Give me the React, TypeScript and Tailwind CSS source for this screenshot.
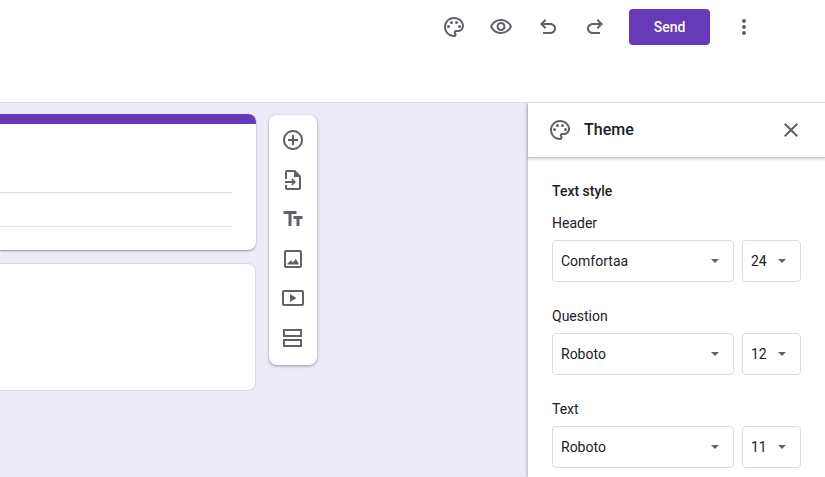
import React, { useState } from 'react';
import { MdClose, MdMoreVert, MdOutlinePalette, MdOutlineVisibility, MdTextFields } from 'react-icons/md';

type StyleKey = 'header' | 'question' | 'text';

interface TextStyle {
    key: StyleKey;
    label: string;
    font: string;
    size: string;
}

const FONTS = ['Roboto', 'Comfortaa', 'Lato', 'Open Sans', 'Inter'];
const SIZES = ['10', '11', '12', '14', '18', '20', '24', '30'];

const initialStyles: TextStyle[] = [
    { key: 'header', label: 'Header', font: 'Comfortaa', size: '24' },
    { key: 'question', label: 'Question', font: 'Roboto', size: '12' },
    { key: 'text', label: 'Text', font: 'Roboto', size: '11' },
];

const Icon: React.FC<{ children: React.ReactNode }> = ({ children }) => (
    <svg xmlns="http://www.w3.org/2000/svg" className="h-6 w-6" viewBox="0 0 24 24" fill="currentColor" aria-hidden="true">
        {children}
    </svg>
);

const UndoIcon = () => (
    <Icon>
        <path d="M7 19v-2h7.1c1.05 0 1.96-.33 2.74-1S18 14.5 18 13.5s-.39-1.83-1.16-2.5-1.69-1-2.74-1H7.8l2.6 2.6L9 14 4 9l5-5 1.4 1.4L7.8 8h6.3c1.62 0 3 .53 4.16 1.58S20 11.93 20 13.5s-.58 2.88-1.74 3.93S15.72 19 14.1 19H7z" />
    </Icon>
);

const RedoIcon = () => (
    <Icon>
        <path d="M17 19v-2H9.9c-1.05 0-1.96-.33-2.74-1S6 14.5 6 13.5s.39-1.83 1.16-2.5S8.85 10 9.9 10h6.3l-2.6 2.6L15 14l5-5-5-5-1.4 1.4L16.2 8H9.9c-1.62 0-3 .53-4.16 1.58S4 11.93 4 13.5s.58 2.88 1.74 3.93S8.28 19 9.9 19H17z" />
    </Icon>
);

const AddIcon = () => (
    <Icon>
        <path d="M13 7h-2v4H7v2h4v4h2v-4h4v-2h-4V7zm-1-5C6.48 2 2 6.48 2 12s4.48 10 10 10 10-4.48 10-10S17.52 2 12 2zm0 18c-4.41 0-8-3.59-8-8s3.59-8 8-8 8 3.59 8 8-3.59 8-8 8z" />
    </Icon>
);

const ImportIcon = () => (
    <Icon>
        <path d="M14 2H6c-1.1 0-2 .9-2 2v7h2V4h7v5h5v11H6v-3H4v3c0 1.1.9 2 2 2h12c1.1 0 2-.9 2-2V8l-6-6z" />
        <path d="M11.4 10.5 10.2 11.7 11.5 13H4v2h7.5l-1.3 1.3 1.2 1.2L15 14l-3.6-3.5z" />
    </Icon>
);

const ImageIcon = () => (
    <Icon>
        <path d="M19 3H5c-1.1 0-2 .9-2 2v14c0 1.1.9 2 2 2h14c1.1 0 2-.9 2-2V5c0-1.1-.9-2-2-2zm0 16H5V5h14v14z" />
        <path d="M6.5 17.5h11v-1.6L14.8 12l-2.9 3.6-2-2.4-3.4 3.2v1.1z" />
    </Icon>
);

const VideoIcon = () => (
    <Icon>
        <path d="M21 4H3c-1.1 0-2 .9-2 2v12c0 1.1.9 2 2 2h18c1.1 0 2-.9 2-2V6c0-1.1-.9-2-2-2zm0 14H3V6h18v12z" />
        <path d="M9 8v8l6.5-4L9 8z" />
    </Icon>
);

const SectionIcon = () => (
    <Icon>
        <path d="M2 3v8h19V3H2zm17 6H4V5h15v4zM2 13v8h19v-8H2zm17 6H4v-4h15v4z" />
    </Icon>
);

const topActions = [
    { label: 'Customize theme', icon: <MdOutlinePalette className="h-6 w-6" /> },
    { label: 'Preview', icon: <MdOutlineVisibility className="h-6 w-6" /> },
    { label: 'Undo', icon: <UndoIcon /> },
    { label: 'Redo', icon: <RedoIcon /> },
];

const tools = [
    { label: 'Add question', icon: <AddIcon /> },
    { label: 'Import questions', icon: <ImportIcon /> },
    { label: 'Add title and description', icon: <MdTextFields className="h-6 w-6" /> },
    { label: 'Add image', icon: <ImageIcon /> },
    { label: 'Add video', icon: <VideoIcon /> },
    { label: 'Add section', icon: <SectionIcon /> },
];

interface SelectProps {
    id: string;
    label: string;
    value: string;
    options: string[];
    className: string;
    onChange: (value: string) => void;
}

const Select: React.FC<SelectProps> = ({ id, label, value, options, className, onChange }) => (
    <div className={`grid items-center ${className}`}>
        <select
            id={id}
            aria-label={label}
            value={value}
            onChange={(e) => onChange(e.target.value)}
            className="col-start-1 row-start-1 h-[42px] w-full appearance-none rounded border border-[#dadce0] bg-white pl-2 text-sm text-[#202124]"
        >
            {options.map((option) => (
                <option key={option} value={option}>{option}</option>
            ))}
        </select>
        <svg className="pointer-events-none col-start-1 row-start-1 mr-[15px] h-1 w-2 justify-self-end text-[#5f6368]" viewBox="0 0 8 4" fill="currentColor" aria-hidden="true">
            <path d="M0 0h8L4 4z" />
        </svg>
    </div>
);

const ThemePanel = () => {
    const [styles, setStyles] = useState<TextStyle[]>(initialStyles);

    const update = (key: StyleKey, changes: Partial<TextStyle>) => {
        setStyles(styles.map(s => (s.key === key ? { ...s, ...changes } : s)));
    };

    return (
        <aside className="z-10 w-[297px] shrink-0 bg-white shadow-[0_0_4px_rgba(60,64,67,0.5)]">
            <div className="flex h-[55px] items-center border-b border-[#c8c9cb] pl-5 pr-[22px] text-[#5f6368] shadow-[0_1px_3px_rgba(60,64,67,0.25)]">
                <MdOutlinePalette className="h-6 w-6" />
                <h2 className="ml-3 flex-1 text-base font-medium text-[#202124]">Theme</h2>
                <button aria-label="Close" className="text-[#5f6368]">
                    <MdClose className="h-6 w-6" />
                </button>
            </div>
            <div className="px-6 pb-2 pt-[23px] text-sm text-[#202124]">
                <h3 className="mb-3 font-medium">Text style</h3>
                <div className="flex flex-col gap-6">
                    {styles.map((style) => (
                        <div key={style.key}>
                            <label htmlFor={`font-${style.key}`} className="mb-[7px] block">{style.label}</label>
                            <div className="flex gap-2">
                                <Select
                                    id={`font-${style.key}`}
                                    label={`${style.label} font`}
                                    value={style.font}
                                    options={FONTS}
                                    className="flex-1"
                                    onChange={(font) => update(style.key, { font })}
                                />
                                <Select
                                    id={`size-${style.key}`}
                                    label={`${style.label} size`}
                                    value={style.size}
                                    options={SIZES}
                                    className="w-[59px]"
                                    onChange={(size) => update(style.key, { size })}
                                />
                            </div>
                        </div>
                    ))}
                </div>
            </div>
        </aside>
    );
};

const App: React.FC = () => {
    return (
        <div className="flex min-h-screen flex-col bg-white font-[Roboto,sans-serif]">
            <header className="z-20 flex h-[103px] items-start justify-end border-b border-[#dadce0] bg-white pr-[69px] pt-[9px]">
                <div className="flex h-9 items-center text-[#5f6368]">
                    <div className="mr-[22px] flex gap-[23px]">
                        {topActions.map((action) => (
                            <button key={action.label} aria-label={action.label}>{action.icon}</button>
                        ))}
                    </div>
                    <button className="h-9 w-[81px] rounded bg-[#673ab7] text-sm font-medium text-white">Send</button>
                    <button aria-label="More" className="ml-[22px]">
                        <MdMoreVert className="h-6 w-6" />
                    </button>
                </div>
            </header>

            <div className="flex flex-1">
                <main className="flex flex-1 items-start bg-[#eeebf9] pr-[211px] pt-[11px]">
                    <div className="flex flex-1 flex-col gap-[13px]">
                        <section className="rounded-r-lg border-t-[10px] border-[#673ab7] bg-white pb-[23px] pr-6 pt-[68px] shadow-[0_1px_2px_rgba(60,64,67,0.55)]">
                            <div className="border-b border-[#dadce0]"></div>
                            <div className="h-[34px] border-b border-[#e4e5e7]"></div>
                        </section>
                        <section className="h-32 rounded-r-lg border border-l-0 border-[#dadce0] bg-white"></section>
                    </div>
                    <div className="ml-[13px] mt-px flex h-[250px] w-12 flex-col items-center justify-between rounded-lg bg-white pb-[15px] pt-[13px] text-[#5f6368] shadow-[0_1px_3px_rgba(60,64,67,0.5)]">
                        {tools.map((tool) => (
                            <button key={tool.label} aria-label={tool.label}>{tool.icon}</button>
                        ))}
                    </div>
                </main>
                <ThemePanel />
            </div>
        </div>
    );
};

export default App;
